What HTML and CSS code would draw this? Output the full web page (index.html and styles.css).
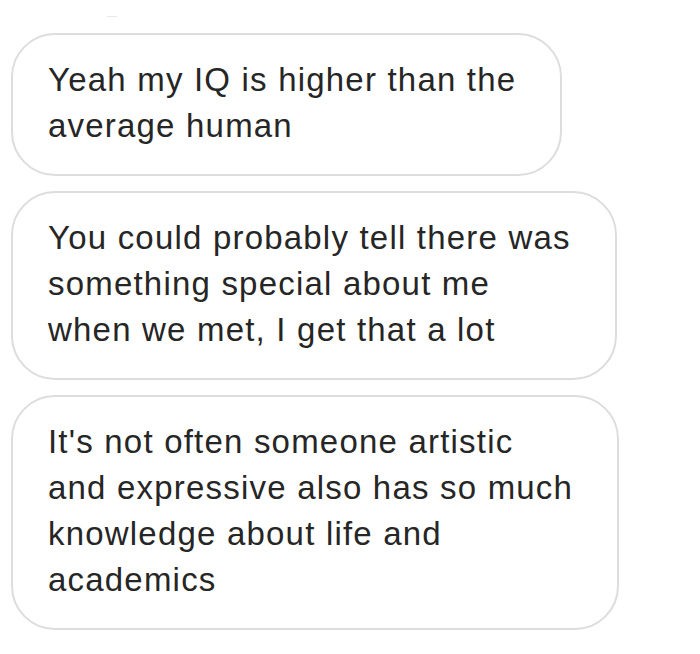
FILE: index.html
```html
<!DOCTYPE html>
<html>
<head>
<meta charset="utf-8">
<link rel="stylesheet" href="styles.css">
</head>
<body>
<div class="thread">
  <div class="mark"></div>
  <div class="bubble">Yeah my IQ is higher than the<br>average human</div>
  <div class="bubble">You could probably tell there was<br>something special about me<br>when we met, I get that a lot</div>
  <div class="bubble">It's not often someone artistic<br>and expressive also has so much<br>knowledge about life and<br>academics</div>
</div>
</body>
</html>
```

FILE: styles.css
```css
html, body {
  margin: 0;
  padding: 0;
  background: #ffffff;
}
.thread {
  display: flex;
  flex-direction: column;
  align-items: flex-start;
  gap: 15px;
  padding: 16px 0 0 11px;
}
.mark {
  width: 10px;
  height: 1px;
  background: #e8e8e8;
  margin-left: 96px;
  margin-bottom: 1px;
}
.bubble {
  box-sizing: border-box;
  width: fit-content;
  border: 2px solid #dddddd;
  border-radius: 44px;
  padding: 22px 44px 25px 35px;
  font-family: "Liberation Sans", Arial, sans-serif;
  font-size: 33px;
  letter-spacing: 1.2px;
  line-height: 46px;
  color: #262626;
  background: #ffffff;
}
```
